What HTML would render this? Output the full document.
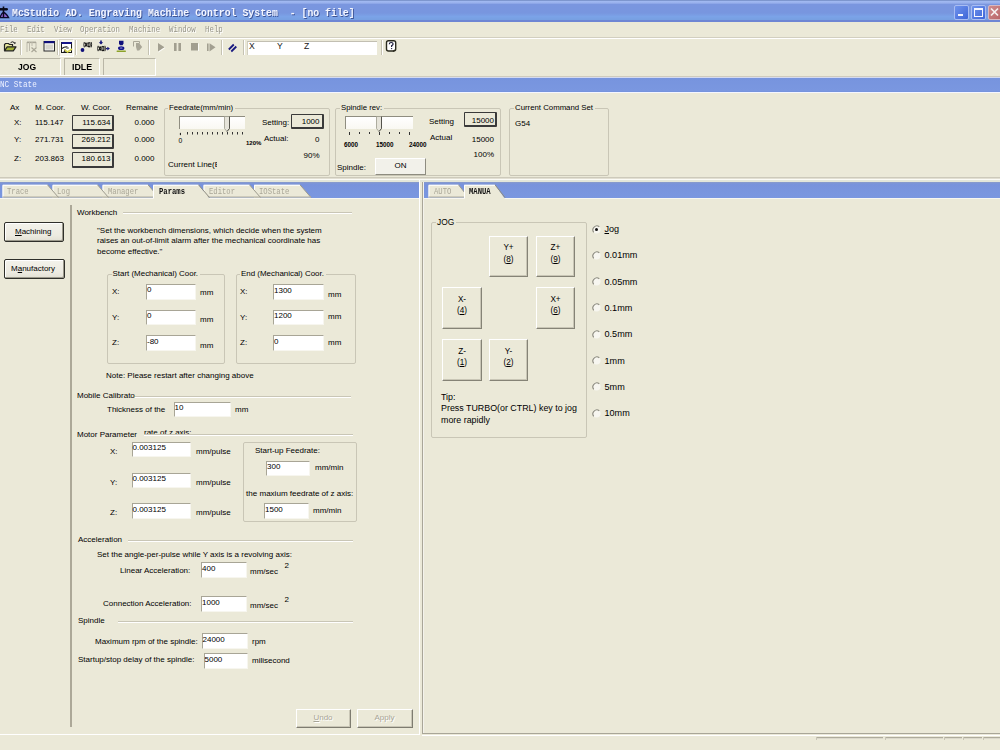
<!DOCTYPE html><html><head><meta charset="utf-8"><style>
html,body{margin:0;padding:0;}
body{width:1000px;height:750px;overflow:hidden;background:#EBE9D8;position:relative;font-family:"Liberation Sans",sans-serif;}
.a{position:absolute;}
.t{white-space:pre;}
</style></head><body>
<div class="a" style="left:0px;top:0px;width:1000px;height:22px;background:linear-gradient(#7D96CE 0px,#7D96CE 1px,#A3BBF2 1px,#98B0EC 3px,#7A96DF 4.5px,#7896DF 13px,#7BA3E8 16.5px,#77A0E2 19.5px,#6E86D4 20.5px,#6E86D4 22px);"></div>
<svg class="a" style="left:0;top:2px" width="10" height="18" viewBox="0 0 10 18">
<path d="M0 6.5H7l1 0.8-1 0.8H0z" fill="#0A0A1A" stroke="#0A0A1A" stroke-width="0.9"/>
<path d="M3.5 4.5V15.5" stroke="#0A0A1A" stroke-width="1.6"/>
<path d="M0 15.5Q1.5 11 3.5 10.5Q6 11 8.6 15.6z" fill="#8A60C8" stroke="#0A0A2A" stroke-width="1.3"/>
<path d="M3.5 10.5V15.5" stroke="#0A0A1A" stroke-width="1.4"/>
</svg>
<div class="a t" style="left:12px;top:7.50px;font-size:11px;line-height:10px;color:#F4F6FF;font-weight:bold;font-family:'Liberation Mono', monospace;text-shadow:1px 1px 0 #3E5596;transform:scaleX(0.895);transform-origin:0 0;">McStudio AD. Engraving Machine Control System  - [no file]</div>
<div class="a" style="left:954px;top:4.5px;width:14.5px;height:15px;border-radius:2px;border:1px solid #A9BDF2;box-sizing:border-box;background:linear-gradient(135deg,#6F93EC,#3E66D8);"></div>
<div class="a" style="left:957.5px;top:14px;width:5.5px;height:2px;background:#F4F6FF;"></div>
<div class="a" style="left:971px;top:4.5px;width:15px;height:15px;border-radius:2px;border:1px solid #A9BDF2;box-sizing:border-box;background:linear-gradient(135deg,#6F93EC,#3E66D8);"></div>
<div class="a" style="left:974px;top:8px;width:9px;height:8.5px;border:1px solid #F4F6FF;border-top-width:2px;box-sizing:border-box;"></div>
<div class="a" style="left:988px;top:4.5px;width:15px;height:15px;border-radius:2px;border:1px solid #D8B8C0;box-sizing:border-box;background:linear-gradient(135deg,#CF8C8E,#B86466);"></div>
<svg class="a" style="left:988px;top:4px" width="12" height="15"><path d="M3 4.5L10 11.5M10 4.5L3 11.5" stroke="#F6F0F0" stroke-width="1.7"/></svg>

<div class="a t" style="left:0px;top:25.40px;font-size:8.5px;line-height:10px;color:#97958A;font-weight:normal;font-family:'Liberation Mono', monospace;text-shadow:1px 1px 0 #FFFFFF;transform:scaleX(0.87);transform-origin:0 0;">File</div>
<div class="a t" style="left:27px;top:25.40px;font-size:8.5px;line-height:10px;color:#97958A;font-weight:normal;font-family:'Liberation Mono', monospace;text-shadow:1px 1px 0 #FFFFFF;transform:scaleX(0.87);transform-origin:0 0;">Edit</div>
<div class="a t" style="left:54px;top:25.40px;font-size:8.5px;line-height:10px;color:#97958A;font-weight:normal;font-family:'Liberation Mono', monospace;text-shadow:1px 1px 0 #FFFFFF;transform:scaleX(0.87);transform-origin:0 0;">View</div>
<div class="a t" style="left:80px;top:25.40px;font-size:8.5px;line-height:10px;color:#97958A;font-weight:normal;font-family:'Liberation Mono', monospace;text-shadow:1px 1px 0 #FFFFFF;transform:scaleX(0.87);transform-origin:0 0;">Operation</div>
<div class="a t" style="left:128.5px;top:25.40px;font-size:8.5px;line-height:10px;color:#97958A;font-weight:normal;font-family:'Liberation Mono', monospace;text-shadow:1px 1px 0 #FFFFFF;transform:scaleX(0.87);transform-origin:0 0;">Machine</div>
<div class="a t" style="left:168.5px;top:25.40px;font-size:8.5px;line-height:10px;color:#97958A;font-weight:normal;font-family:'Liberation Mono', monospace;text-shadow:1px 1px 0 #FFFFFF;transform:scaleX(0.87);transform-origin:0 0;">Window</div>
<div class="a t" style="left:205px;top:25.40px;font-size:8.5px;line-height:10px;color:#97958A;font-weight:normal;font-family:'Liberation Mono', monospace;text-shadow:1px 1px 0 #FFFFFF;transform:scaleX(0.87);transform-origin:0 0;">Help</div>
<div class="a" style="left:0px;top:37px;width:1000px;height:1px;background:#D2CFC0;"></div>
<div class="a" style="left:0px;top:38px;width:1000px;height:1px;background:#FFFFFF;"></div>
<div class="a" style="left:20px;top:40px;width:1px;height:15px;background:#C5C2B2;"></div>
<div class="a" style="left:21px;top:40px;width:1px;height:15px;background:#FFFFFF;"></div>
<div class="a" style="left:57px;top:40px;width:1px;height:15px;background:#C5C2B2;"></div>
<div class="a" style="left:58px;top:40px;width:1px;height:15px;background:#FFFFFF;"></div>
<div class="a" style="left:74.5px;top:40px;width:1px;height:15px;background:#C5C2B2;"></div>
<div class="a" style="left:75.5px;top:40px;width:1px;height:15px;background:#FFFFFF;"></div>
<div class="a" style="left:148px;top:40px;width:1px;height:15px;background:#C5C2B2;"></div>
<div class="a" style="left:149px;top:40px;width:1px;height:15px;background:#FFFFFF;"></div>
<div class="a" style="left:221px;top:40px;width:1px;height:15px;background:#C5C2B2;"></div>
<div class="a" style="left:222px;top:40px;width:1px;height:15px;background:#FFFFFF;"></div>
<div class="a" style="left:242.5px;top:40px;width:1px;height:15px;background:#C5C2B2;"></div>
<div class="a" style="left:243.5px;top:40px;width:1px;height:15px;background:#FFFFFF;"></div>
<div class="a" style="left:380.5px;top:40px;width:1px;height:15px;background:#C5C2B2;"></div>
<div class="a" style="left:381.5px;top:40px;width:1px;height:15px;background:#FFFFFF;"></div>
<div class="a" style="left:58.5px;top:38.5px;width:15px;height:18px;border-top:1px solid #D8D5C8;border-left:1px solid #D8D5C8;border-bottom:1px solid #fff;border-right:1px solid #fff;box-sizing:border-box;background:#F6F5EE;"></div>
<svg class="a" style="left:0;top:36px" width="400" height="22" viewBox="0 36 400 22">
<!-- open folder -->
<path d="M4.5 50.5V44.5l1-1h3l1 1h3v2" fill="#E4E49A" stroke="#222" stroke-width="1.2"/>
<path d="M4.5 50.8L7.2 46.8H16L13.3 50.8z" fill="#A3B338" stroke="#222" stroke-width="1.2" stroke-linejoin="round"/>
<path d="M10.5 42.8Q12 40.8 14.5 42.6" fill="none" stroke="#222" stroke-width="1"/><path d="M13.3 42.5h2.8l-1.2 1.8z" fill="#222"/>
<!-- disabled table x -->
<path d="M27 52V42h9v5" fill="none" stroke="#BDBAAC" stroke-width="1"/>
<path d="M27 42.5h9" stroke="#A9A697" stroke-width="1.3"/>
<path d="M29.5 42v9M32 42v4" stroke="#BDBAAC" stroke-width="1"/>
<path d="M31.5 47.5l5 4.5M36.5 47.5l-5 4.5" stroke="#A9A697" stroke-width="1.2"/>
<!-- window -->
<rect x="44" y="41.5" width="10.5" height="9.5" fill="#F4F4F0" stroke="#2A2A2A" stroke-width="1"/>
<rect x="44" y="41" width="10.5" height="2.2" fill="#10107A"/>
<rect x="45.5" y="44.5" width="7.5" height="5" fill="#D6D5CE"/>
<!-- pressed btn icon: window with glasses + pencil -->
<rect x="61.5" y="42.5" width="10" height="10" fill="#FFFFFF" stroke="#1A1A1A" stroke-width="1"/>
<rect x="61.5" y="42" width="10" height="2" fill="#14148A"/>
<path d="M62 48.5q2.5-2 5.5-1.5" stroke="#222" stroke-width="1.2" fill="none"/>
<ellipse cx="67.5" cy="48" rx="1.6" ry="1.1" fill="#888"/>
<path d="M64 52l1-2 1 1.5" stroke="#111" stroke-width="1.1" fill="none"/>
<path d="M64.5 49.5l3 2.5 4.5-3" stroke="#D8D64A" stroke-width="1.6" fill="none"/>
<!-- dot (x0) -->
<circle cx="82.5" cy="50" r="1.9" fill="#10107A"/>
<path d="M84.3 42q-1 2.7 0 5.4" stroke="#1A1A1A" stroke-width="0.9" fill="none"/><path d="M84.8 42.6l2.6 4.2M87.4 42.6l-2.6 4.2" stroke="#111" stroke-width="1.1"/><ellipse cx="89.1" cy="44.7" rx="1.05" ry="2.2" stroke="#111" stroke-width="1.1" fill="none"/><path d="M91.1 42q1 2.7 0 5.4" stroke="#1A1A1A" stroke-width="1" fill="none"/>
<!-- down arrow (x0) right arrow -->
<path d="M101 40.5v2.5" stroke="#10107A" stroke-width="1.6"/><path d="M98.8 42.3h4.4l-2.2 2.3z" fill="#10107A"/>
<path d="M98.1 45.8q-1 2.7 0 5.4" stroke="#1A1A1A" stroke-width="0.9" fill="none"/><path d="M98.6 46.4l2.6 4.2M101.2 46.4l-2.6 4.2" stroke="#111" stroke-width="1.1"/><ellipse cx="102.89999999999999" cy="48.5" rx="1.05" ry="2.2" stroke="#111" stroke-width="1.1" fill="none"/><path d="M104.89999999999999 45.8q1 2.7 0 5.4" stroke="#1A1A1A" stroke-width="1" fill="none"/>
<path d="M106 48.6h1.6" stroke="#10107A" stroke-width="1.4"/><path d="M107.3 46.8l2.6 1.8-2.6 1.8z" fill="#10107A"/>
<!-- person -->
<path d="M119 40.8h4.5v3l-1 1.5h-2.5l-1-1.5z" fill="#10107A"/>
<ellipse cx="121.2" cy="48.2" rx="3.2" ry="1.9" fill="#14148A"/>
<ellipse cx="121.2" cy="48" rx="1.4" ry="0.6" fill="#A0A0E0"/>
<rect x="116.5" y="50.6" width="9.5" height="1.4" rx="0.7" fill="#8CA22A"/>
<!-- disabled hand -->
<path d="M133.5 46.5v-5h6v2" fill="none" stroke="#A9A697" stroke-width="1"/>
<path d="M136 43h3l3.2 4-3 3.5h-2.2l-1-3.5z" fill="#A9A697"/>
<!-- play pause stop step (disabled) -->
<path d="M158 43l6.5 4.3-6.5 4.3z" fill="#A29F90"/>
<path d="M158.5 52l6.3-4.2" stroke="#FFFFFF" stroke-width="0.9"/>
<rect x="174" y="43" width="2.6" height="8" fill="#A29F90"/><rect x="178.4" y="43" width="2.6" height="8" fill="#A29F90"/>
<rect x="191" y="43" width="7" height="7.5" fill="#A29F90"/>
<path d="M198.5 43.5v7.5" stroke="#fff" stroke-width="0.8"/>
<path d="M207 43.5h1.6v7.6h-1.6z M209.5 43.2l6 4.1-6 4.1z" fill="#A29F90"/>
<!-- // -->
<path d="M228.8 49.5l5-5M231.3 51.5l5-5" stroke="#1A1A80" stroke-width="1.8"/>
<!-- help -->
<rect x="386.5" y="40.8" width="9.2" height="10.2" rx="2" fill="#FFFFFF" stroke="#2A2A1E" stroke-width="1.4"/>
<path d="M389.3 44.2q0-1.7 1.9-1.7t1.9 1.5q0 1-1.5 1.7v1.2" fill="none" stroke="#1A1A3A" stroke-width="1.2"/>
<circle cx="391.6" cy="48.6" r="0.7" fill="#1A1A3A"/>
<path d="M393 51.5l1.8-1.6" stroke="#2A2A1E" stroke-width="1.2"/>
</svg>
<div class="a" style="left:247px;top:40.5px;width:130px;height:14px;background:#fff;border-top:1px solid #C2BFB2;border-left:1px solid #D2CFC2;box-sizing:border-box;"></div>
<div class="a t" style="left:249px;top:41.00px;font-size:8.6px;line-height:10px;color:#222;font-weight:normal;font-family:'Liberation Sans', sans-serif;">X</div>
<div class="a t" style="left:277px;top:41.00px;font-size:8.6px;line-height:10px;color:#222;font-weight:normal;font-family:'Liberation Sans', sans-serif;">Y</div>
<div class="a t" style="left:304px;top:41.00px;font-size:8.6px;line-height:10px;color:#222;font-weight:normal;font-family:'Liberation Sans', sans-serif;">Z</div>
<div class="a" style="left:-2px;top:58px;width:63px;height:18px;border-top:1px solid #B9B6A6;border-left:1px solid #B9B6A6;border-bottom:1px solid #FFFFFF;border-right:1px solid #FFFFFF;box-sizing:border-box;"></div>
<div class="a" style="left:64px;top:58px;width:36px;height:18px;border-top:1px solid #B9B6A6;border-left:1px solid #B9B6A6;border-bottom:1px solid #FFFFFF;border-right:1px solid #FFFFFF;box-sizing:border-box;"></div>
<div class="a" style="left:103px;top:58px;width:53px;height:18px;border-top:1px solid #B9B6A6;border-left:1px solid #B9B6A6;border-bottom:1px solid #FFFFFF;border-right:1px solid #FFFFFF;box-sizing:border-box;"></div>
<div class="a t" style="left:18px;top:62.30px;font-size:9.5px;line-height:10px;color:#000;font-weight:bold;font-family:'Liberation Sans', sans-serif;transform:scaleX(0.9);transform-origin:0 0;">JOG</div>
<div class="a t" style="left:72px;top:62.30px;font-size:9.5px;line-height:10px;color:#000;font-weight:bold;font-family:'Liberation Sans', sans-serif;transform:scaleX(0.93);transform-origin:0 0;">IDLE</div>
<div class="a" style="left:0px;top:76px;width:1000px;height:1px;background:#CFCBBE;"></div>
<div class="a" style="left:0px;top:75px;width:156px;height:1px;background:#FFFFFF;"></div>
<div class="a" style="left:0px;top:77px;width:1000px;height:17px;background:linear-gradient(#D4DAF0 0px,#D4DAF0 1px,#7794DE 1px,#7A97E0 14px,#7290DA 15px,#F4F6FF 15px,#F4F6FF 16px,#ECE9D8 16px);"></div>
<div class="a t" style="left:0px;top:80.30px;font-size:8.5px;line-height:10px;color:#EEF1FF;font-weight:normal;font-family:'Liberation Mono', monospace;transform:scaleX(0.9);transform-origin:0 0;">NC State</div>
<div class="a t" style="left:10px;top:103.00px;font-size:8.0px;line-height:10px;color:#000;font-weight:normal;font-family:'Liberation Sans', sans-serif;">Ax</div>
<div class="a t" style="left:35px;top:103.00px;font-size:8.0px;line-height:10px;color:#000;font-weight:normal;font-family:'Liberation Sans', sans-serif;">M. Coor.</div>
<div class="a t" style="left:81px;top:103.00px;font-size:8.0px;line-height:10px;color:#000;font-weight:normal;font-family:'Liberation Sans', sans-serif;">W. Coor.</div>
<div class="a t" style="left:126px;top:103.00px;font-size:8.0px;line-height:10px;color:#000;font-weight:normal;font-family:'Liberation Sans', sans-serif;width:32px;overflow:hidden;">Remaine</div>
<div class="a t" style="left:14px;top:117.80px;font-size:8.0px;line-height:10px;color:#000;font-weight:normal;font-family:'Liberation Sans', sans-serif;">X:</div>
<div class="a t" style="left:35px;top:117.80px;font-size:8.0px;line-height:10px;color:#000;font-weight:normal;font-family:'Liberation Sans', sans-serif;">115.147</div>
<div class="a" style="left:72px;top:115.3px;width:42px;height:15.500000000000014px;border:1px solid #3A3A3A;border-right-width:2px;border-bottom-width:2px;border-radius:1px;box-sizing:border-box;"></div>
<div class="a t" style="left:70.5px;width:40px;text-align:right;top:117.80px;font-size:8.0px;line-height:10px;color:#000;font-weight:normal;font-family:'Liberation Sans', sans-serif;">115.634</div>
<div class="a t" style="left:114.5px;width:40px;text-align:right;top:117.80px;font-size:8.0px;line-height:10px;color:#000;font-weight:normal;font-family:'Liberation Sans', sans-serif;">0.000</div>
<div class="a t" style="left:14px;top:135.40px;font-size:8.0px;line-height:10px;color:#000;font-weight:normal;font-family:'Liberation Sans', sans-serif;">Y:</div>
<div class="a t" style="left:35px;top:135.40px;font-size:8.0px;line-height:10px;color:#000;font-weight:normal;font-family:'Liberation Sans', sans-serif;">271.731</div>
<div class="a" style="left:72px;top:133.5px;width:42px;height:15.5px;border:1px solid #3A3A3A;border-right-width:2px;border-bottom-width:2px;border-radius:1px;box-sizing:border-box;"></div>
<div class="a t" style="left:70.5px;width:40px;text-align:right;top:135.40px;font-size:8.0px;line-height:10px;color:#000;font-weight:normal;font-family:'Liberation Sans', sans-serif;">269.212</div>
<div class="a t" style="left:114.5px;width:40px;text-align:right;top:135.40px;font-size:8.0px;line-height:10px;color:#000;font-weight:normal;font-family:'Liberation Sans', sans-serif;">0.000</div>
<div class="a t" style="left:14px;top:153.80px;font-size:8.0px;line-height:10px;color:#000;font-weight:normal;font-family:'Liberation Sans', sans-serif;">Z:</div>
<div class="a t" style="left:35px;top:153.80px;font-size:8.0px;line-height:10px;color:#000;font-weight:normal;font-family:'Liberation Sans', sans-serif;">203.863</div>
<div class="a" style="left:72px;top:152px;width:42px;height:16px;border:1px solid #3A3A3A;border-right-width:2px;border-bottom-width:2px;border-radius:1px;box-sizing:border-box;"></div>
<div class="a t" style="left:70.5px;width:40px;text-align:right;top:153.80px;font-size:8.0px;line-height:10px;color:#000;font-weight:normal;font-family:'Liberation Sans', sans-serif;">180.613</div>
<div class="a t" style="left:114.5px;width:40px;text-align:right;top:153.80px;font-size:8.0px;line-height:10px;color:#000;font-weight:normal;font-family:'Liberation Sans', sans-serif;">0.000</div>
<div class="a" style="left:163.5px;top:107.5px;width:166.5px;height:68.0px;border:1px solid #C9C6B6;box-sizing:border-box;border-radius:2px;"></div>
<div class="a t" style="left:169px;top:102.50px;font-size:7.8px;line-height:10px;color:#000;font-weight:normal;font-family:'Liberation Sans', sans-serif;margin-left:-1px;"><span style="background:#EBE9D8;padding:0 2px 0 1px;">Feedrate(mm/min)</span></div>
<div class="a" style="left:179px;top:115.5px;width:66px;height:13px;background:linear-gradient(#fff,#F9F8F2);border-top:1px solid #8F8D80;border-left:1px solid #8F8D80;box-sizing:border-box;"></div>
<svg class="a" style="left:223px;top:114.5px" width="9" height="18"><path d="M1.5 1.5h5v12l-2.5 3-2.5-3z" fill="#E6E4DA" stroke="#9C9A8C" stroke-width="0.8"/><path d="M6.5 1.5v12l-2.5 3" fill="none" stroke="#55544C" stroke-width="1"/></svg>
<svg class="a" style="left:175px;top:129px" width="80" height="8"><path d="M6 3.5l-1.5 1.5 1.5 1.5" fill="#111"/><rect x="12.0" y="3" width="1" height="2.5" fill="#333"/><rect x="17.0" y="3" width="1" height="2.5" fill="#333"/><rect x="22.0" y="3" width="1" height="2.5" fill="#333"/><rect x="27.0" y="3" width="1" height="2.5" fill="#333"/><rect x="32.0" y="3" width="1" height="2.5" fill="#333"/><rect x="37.0" y="3" width="1" height="2.5" fill="#333"/><rect x="42.0" y="3" width="1" height="2.5" fill="#333"/><rect x="47.0" y="3" width="1" height="2.5" fill="#333"/><rect x="52.0" y="3" width="1" height="2.5" fill="#333"/><rect x="57.0" y="3" width="1" height="2.5" fill="#333"/><rect x="62.0" y="3" width="1" height="2.5" fill="#333"/><rect x="67.0" y="3" width="1" height="2.5" fill="#333"/></svg>
<div class="a t" style="left:178.5px;top:136.00px;font-size:6.8px;line-height:10px;color:#000;font-weight:normal;font-family:'Liberation Sans', sans-serif;letter-spacing:0.2px">0</div>
<div class="a t" style="left:246px;top:137.50px;font-size:6.0px;line-height:10px;color:#000;font-weight:bold;font-family:'Liberation Sans', sans-serif;">120%</div>
<div class="a t" style="left:262px;top:118.00px;font-size:8.0px;line-height:10px;color:#000;font-weight:normal;font-family:'Liberation Sans', sans-serif;">Setting:</div>
<div class="a" style="left:290.5px;top:114px;width:33px;height:15px;border:1px solid #3A3A3A;border-right-width:2px;border-bottom-width:2px;border-radius:1px;box-sizing:border-box;"></div>
<div class="a t" style="left:289.5px;width:30px;text-align:right;top:117.00px;font-size:8.0px;line-height:10px;color:#000;font-weight:normal;font-family:'Liberation Sans', sans-serif;">1000</div>
<div class="a t" style="left:264px;top:134.00px;font-size:8.0px;line-height:10px;color:#000;font-weight:normal;font-family:'Liberation Sans', sans-serif;">Actual:</div>
<div class="a t" style="left:289.5px;width:30px;text-align:right;top:134.80px;font-size:8.0px;line-height:10px;color:#000;font-weight:normal;font-family:'Liberation Sans', sans-serif;">0</div>
<div class="a t" style="left:289.5px;width:30px;text-align:right;top:151.00px;font-size:8.0px;line-height:10px;color:#000;font-weight:normal;font-family:'Liberation Sans', sans-serif;">90%</div>
<div class="a t" style="left:168px;top:159.50px;font-size:8.0px;line-height:10px;color:#000;font-weight:normal;font-family:'Liberation Sans', sans-serif;width:49px;overflow:hidden;">Current Line(E</div>
<div class="a" style="left:335px;top:107.5px;width:166px;height:68.0px;border:1px solid #C9C6B6;box-sizing:border-box;border-radius:2px;"></div>
<div class="a t" style="left:341px;top:102.50px;font-size:7.8px;line-height:10px;color:#000;font-weight:normal;font-family:'Liberation Sans', sans-serif;margin-left:-1px;"><span style="background:#EBE9D8;padding:0 2px 0 1px;">Spindle rev:</span></div>
<div class="a" style="left:345px;top:115.5px;width:68px;height:13px;background:linear-gradient(#fff,#F9F8F2);border-top:1px solid #8F8D80;border-left:1px solid #8F8D80;box-sizing:border-box;"></div>
<svg class="a" style="left:375px;top:114.5px" width="9" height="18"><path d="M1.5 1.5h5v12l-2.5 3-2.5-3z" fill="#E6E4DA" stroke="#9C9A8C" stroke-width="0.8"/><path d="M6.5 1.5v12l-2.5 3" fill="none" stroke="#55544C" stroke-width="1"/></svg>
<svg class="a" style="left:340px;top:129px" width="80" height="8"><rect x="9.0" y="3" width="1" height="3" fill="#333"/><rect x="19.0" y="3" width="1" height="2" fill="#333"/><rect x="29.0" y="3" width="1" height="2" fill="#333"/><rect x="39.0" y="3" width="1" height="3" fill="#333"/><rect x="49.0" y="3" width="1" height="2" fill="#333"/><rect x="59.0" y="3" width="1" height="2" fill="#333"/><rect x="69.0" y="3" width="1" height="3" fill="#333"/></svg>
<div class="a t" style="left:344px;top:139.50px;font-size:6.3px;line-height:10px;color:#000;font-weight:bold;font-family:'Liberation Sans', sans-serif;">6000</div>
<div class="a t" style="left:376px;top:139.50px;font-size:6.3px;line-height:10px;color:#000;font-weight:bold;font-family:'Liberation Sans', sans-serif;">15000</div>
<div class="a t" style="left:409px;top:139.50px;font-size:6.3px;line-height:10px;color:#000;font-weight:bold;font-family:'Liberation Sans', sans-serif;">24000</div>
<div class="a t" style="left:429px;top:117.00px;font-size:8.0px;line-height:10px;color:#000;font-weight:normal;font-family:'Liberation Sans', sans-serif;">Setting</div>
<div class="a" style="left:464px;top:112px;width:33px;height:15px;border:1px solid #3A3A3A;border-right-width:2px;border-bottom-width:2px;border-radius:1px;box-sizing:border-box;"></div>
<div class="a t" style="left:464px;width:30px;text-align:right;top:115.50px;font-size:8.0px;line-height:10px;color:#000;font-weight:normal;font-family:'Liberation Sans', sans-serif;">15000</div>
<div class="a t" style="left:430px;top:133.00px;font-size:8.0px;line-height:10px;color:#000;font-weight:normal;font-family:'Liberation Sans', sans-serif;">Actual</div>
<div class="a t" style="left:464px;width:30px;text-align:right;top:134.50px;font-size:8.0px;line-height:10px;color:#000;font-weight:normal;font-family:'Liberation Sans', sans-serif;">15000</div>
<div class="a t" style="left:464px;width:30px;text-align:right;top:150.00px;font-size:8.0px;line-height:10px;color:#000;font-weight:normal;font-family:'Liberation Sans', sans-serif;">100%</div>
<div class="a t" style="left:337px;top:163.00px;font-size:8.0px;line-height:10px;color:#000;font-weight:normal;font-family:'Liberation Sans', sans-serif;">Spindle:</div>
<div class="a" style="left:375px;top:158px;width:51px;height:17px;background:#F2F1EA;border-top:1px solid #fff;border-left:1px solid #fff;border-right:1px solid #8E8C80;border-bottom:1px solid #8E8C80;box-sizing:border-box;"></div>
<div class="a t" style="left:380.5px;width:40px;text-align:center;top:161.00px;font-size:8.0px;line-height:10px;color:#000;font-weight:normal;font-family:'Liberation Sans', sans-serif;">ON</div>
<div class="a" style="left:509px;top:107.5px;width:99.5px;height:68.0px;border:1px solid #C9C6B6;box-sizing:border-box;border-radius:2px;"></div>
<div class="a t" style="left:515px;top:102.50px;font-size:7.8px;line-height:10px;color:#000;font-weight:normal;font-family:'Liberation Sans', sans-serif;margin-left:-1px;"><span style="background:#EBE9D8;padding:0 2px 0 1px;">Current Command Set</span></div>
<div class="a t" style="left:515px;top:119.00px;font-size:8.0px;line-height:10px;color:#000;font-weight:normal;font-family:'Liberation Sans', sans-serif;">G54</div>
<div class="a" style="left:0px;top:177px;width:1000px;height:1px;background:#CDCABB;"></div>
<div class="a" style="left:0px;top:178px;width:1000px;height:1px;background:#E2DFD2;"></div>
<div class="a" style="left:0px;top:179px;width:1000px;height:1px;background:#FBFBF6;"></div>
<div class="a" style="left:0px;top:180px;width:1000px;height:2px;background:#E3E6DA;"></div>
<div class="a" style="left:0px;top:182px;width:418.5px;height:16px;background:linear-gradient(#8A9CC8,#7893DC 2px,#7A97E0);"></div>
<div class="a" style="left:424px;top:182px;width:576px;height:16px;background:linear-gradient(#8A9CC8,#7893DC 2px,#7A97E0);"></div>
<div class="a" style="left:0px;top:197.5px;width:419px;height:1px;background:#F8F7F0;"></div>
<div class="a" style="left:424px;top:197.5px;width:576px;height:1px;background:#F8F7F0;"></div>
<div class="a" style="left:419px;top:180px;width:1px;height:554.5px;background:#FFFFFF;"></div>
<div class="a" style="left:422px;top:182px;width:1px;height:552px;background:#A9A698;"></div>
<div class="a" style="left:423px;top:182px;width:1px;height:552px;background:#F4F3EC;"></div>
<div class="a" style="left:0px;top:733.5px;width:419.5px;height:1px;background:#FFFFFF;"></div>
<div class="a" style="left:422px;top:733.2px;width:578px;height:1px;background:#A9A698;"></div>
<div class="a" style="left:422px;top:734.5px;width:578px;height:1px;background:#FFFFFF;"></div>
<svg class="a" style="left:0;top:0" width="1000" height="200"><polygon points="254,197.5 254,184.8 300,184.8 311,197.5" fill="#EBE9D8"/><path d="M254.5,197.5 V185.3 H300" stroke="#FFFFFF" stroke-width="1" fill="none"/><path d="M300,184.8 L311,197.5" stroke="#9D9B8E" stroke-width="1" fill="none"/><path d="M254,197.0 H311" stroke="#B0AD9E" stroke-width="1" fill="none"/><polygon points="203.5,197.5 203.5,184.8 249.5,184.8 260.5,197.5" fill="#EBE9D8"/><path d="M204.0,197.5 V185.3 H249.5" stroke="#FFFFFF" stroke-width="1" fill="none"/><path d="M249.5,184.8 L260.5,197.5" stroke="#9D9B8E" stroke-width="1" fill="none"/><path d="M203.5,197.0 H260.5" stroke="#B0AD9E" stroke-width="1" fill="none"/><polygon points="102.5,197.5 102.5,184.8 148.0,184.8 159.0,197.5" fill="#EBE9D8"/><path d="M103.0,197.5 V185.3 H148.0" stroke="#FFFFFF" stroke-width="1" fill="none"/><path d="M148.0,184.8 L159.0,197.5" stroke="#9D9B8E" stroke-width="1" fill="none"/><path d="M102.5,197.0 H159.0" stroke="#B0AD9E" stroke-width="1" fill="none"/><polygon points="52.5,197.5 52.5,184.8 97.5,184.8 108.5,197.5" fill="#EBE9D8"/><path d="M53.0,197.5 V185.3 H97.5" stroke="#FFFFFF" stroke-width="1" fill="none"/><path d="M97.5,184.8 L108.5,197.5" stroke="#9D9B8E" stroke-width="1" fill="none"/><path d="M52.5,197.0 H108.5" stroke="#B0AD9E" stroke-width="1" fill="none"/><polygon points="2.5,197.5 2.5,184.8 47.5,184.8 58.5,197.5" fill="#EBE9D8"/><path d="M3.0,197.5 V185.3 H47.5" stroke="#FFFFFF" stroke-width="1" fill="none"/><path d="M47.5,184.8 L58.5,197.5" stroke="#9D9B8E" stroke-width="1" fill="none"/><path d="M2.5,197.0 H58.5" stroke="#B0AD9E" stroke-width="1" fill="none"/><polygon points="153,199.0 153,184.8 198.5,184.8 209.5,199.0" fill="#EBE9D8"/><path d="M153.5,198.5 V185.3 H198.5" stroke="#FFFFFF" stroke-width="1" fill="none"/><path d="M198.5,184.8 L209.5,197.5" stroke="#8E8C80" stroke-width="1" fill="none"/></svg>
<div class="a t" style="left:7px;top:186.50px;font-size:8.3px;line-height:10px;color:#A9A697;font-weight:normal;font-family:'Liberation Mono', monospace;transform:scaleX(0.87);transform-origin:0 0;">Trace</div>
<div class="a t" style="left:57px;top:186.50px;font-size:8.3px;line-height:10px;color:#A9A697;font-weight:normal;font-family:'Liberation Mono', monospace;transform:scaleX(0.87);transform-origin:0 0;">Log</div>
<div class="a t" style="left:108px;top:186.50px;font-size:8.3px;line-height:10px;color:#A9A697;font-weight:normal;font-family:'Liberation Mono', monospace;transform:scaleX(0.87);transform-origin:0 0;">Manager</div>
<div class="a t" style="left:159px;top:186.50px;font-size:8.3px;line-height:10px;color:#111;font-weight:bold;font-family:'Liberation Mono', monospace;transform:scaleX(0.87);transform-origin:0 0;">Params</div>
<div class="a t" style="left:209px;top:186.50px;font-size:8.3px;line-height:10px;color:#A9A697;font-weight:normal;font-family:'Liberation Mono', monospace;transform:scaleX(0.87);transform-origin:0 0;">Editor</div>
<div class="a t" style="left:259px;top:186.50px;font-size:8.3px;line-height:10px;color:#A9A697;font-weight:normal;font-family:'Liberation Mono', monospace;transform:scaleX(0.87);transform-origin:0 0;">IOState</div>
<svg class="a" style="left:0;top:0" width="1000" height="200"><polygon points="428.5,197.5 428.5,184.8 458.5,184.8 468.5,197.5" fill="#EBE9D8"/><path d="M429.0,197.5 V185.3 H458.5" stroke="#FFFFFF" stroke-width="1" fill="none"/><path d="M458.5,184.8 L468.5,197.5" stroke="#9D9B8E" stroke-width="1" fill="none"/><path d="M428.5,197.0 H468.5" stroke="#B0AD9E" stroke-width="1" fill="none"/><polygon points="464,199.0 464,184.8 495,184.8 505,199.0" fill="#EBE9D8"/><path d="M464.5,198.5 V185.3 H495" stroke="#FFFFFF" stroke-width="1" fill="none"/><path d="M495,184.8 L505,197.5" stroke="#8E8C80" stroke-width="1" fill="none"/></svg>
<div class="a t" style="left:434px;top:186.50px;font-size:8.3px;line-height:10px;color:#A9A697;font-weight:normal;font-family:'Liberation Mono', monospace;transform:scaleX(0.87);transform-origin:0 0;">AUTO</div>
<div class="a t" style="left:469px;top:186.50px;font-size:8.3px;line-height:10px;color:#111;font-weight:bold;font-family:'Liberation Mono', monospace;transform:scaleX(0.87);transform-origin:0 0;">MANUA</div>
<div class="a" style="left:3.5px;top:222px;width:60.5px;height:20px;border:1px solid #2F2F2A;border-radius:2px;box-sizing:border-box;background:linear-gradient(#F3F2EB,#ECEAE0 70%,#E2E0D4);box-shadow:inset -1px -1px 0 #9C9A8C, inset 1px 1px 0 #FFFFFF;"></div>
<div class="a t" style="left:15px;top:226.50px;font-size:8.0px;line-height:10px;color:#000;font-weight:normal;font-family:'Liberation Sans', sans-serif;"><u>M</u>achining</div>
<div class="a" style="left:4px;top:259px;width:60.5px;height:20px;border:1px solid #2F2F2A;border-radius:2px;box-sizing:border-box;background:linear-gradient(#F3F2EB,#ECEAE0 70%,#E2E0D4);box-shadow:inset -1px -1px 0 #9C9A8C, inset 1px 1px 0 #FFFFFF;"></div>
<div class="a t" style="left:11px;top:264.00px;font-size:8.0px;line-height:10px;color:#000;font-weight:normal;font-family:'Liberation Sans', sans-serif;">M<u>a</u>nufactory</div>
<div class="a" style="left:70px;top:205px;width:1.5px;height:522px;background:#ACA898;"></div>
<div class="a t" style="left:77px;top:208.00px;font-size:8.0px;line-height:10px;color:#000;font-weight:normal;font-family:'Liberation Sans', sans-serif;">Workbench</div>
<div class="a" style="left:123px;top:212px;width:229px;height:1px;background:#C9C6B6;"></div>
<div class="a" style="left:123px;top:213px;width:229px;height:1px;background:#FFFFFF;"></div>
<div class="a t" style="left:97px;top:225.50px;font-size:8.0px;line-height:10px;color:#000;font-weight:normal;font-family:'Liberation Sans', sans-serif;">"Set the workbench dimensions, which decide when the system</div>
<div class="a t" style="left:97px;top:235.50px;font-size:8.0px;line-height:10px;color:#000;font-weight:normal;font-family:'Liberation Sans', sans-serif;">raises an out-of-limit alarm after the mechanical coordinate has</div>
<div class="a t" style="left:97px;top:247.00px;font-size:8.0px;line-height:10px;color:#000;font-weight:normal;font-family:'Liberation Sans', sans-serif;">become effective."</div>
<div class="a" style="left:106.5px;top:273.5px;width:118.5px;height:90.5px;border:1px solid #C9C6B6;box-sizing:border-box;border-radius:2px;"></div>
<div class="a t" style="left:112.5px;top:268.50px;font-size:7.95px;line-height:10px;color:#000;font-weight:normal;font-family:'Liberation Sans', sans-serif;margin-left:-1px;"><span style="background:#EBE9D8;padding:0 2px 0 1px;">Start (Mechanical) Coor.</span></div>
<div class="a" style="left:235.5px;top:273.5px;width:120.5px;height:90.5px;border:1px solid #C9C6B6;box-sizing:border-box;border-radius:2px;"></div>
<div class="a t" style="left:241px;top:268.50px;font-size:7.95px;line-height:10px;color:#000;font-weight:normal;font-family:'Liberation Sans', sans-serif;margin-left:-1px;"><span style="background:#EBE9D8;padding:0 2px 0 1px;">End (Mechanical) Coor.</span></div>
<div class="a t" style="left:112px;top:286.70px;font-size:8.0px;line-height:10px;color:#000;font-weight:normal;font-family:'Liberation Sans', sans-serif;">X:</div>
<div class="a" style="left:146px;top:283.7px;width:50px;height:16.0px;background:#fff;border-top:1px solid #A8A596;border-left:1px solid #A8A596;border-right:1px solid #F7F6EF;border-bottom:1px solid #F7F6EF;box-sizing:border-box;"></div>
<div class="a t" style="left:147px;top:285.30px;font-size:8.0px;line-height:10px;color:#000;font-weight:normal;font-family:'Liberation Sans', sans-serif;">0</div>
<div class="a t" style="left:200px;top:287.50px;font-size:8.0px;line-height:10px;color:#000;font-weight:normal;font-family:'Liberation Sans', sans-serif;">mm</div>
<div class="a t" style="left:240px;top:287.00px;font-size:8.0px;line-height:10px;color:#000;font-weight:normal;font-family:'Liberation Sans', sans-serif;">X:</div>
<div class="a" style="left:273px;top:284px;width:51px;height:15.5px;background:#fff;border-top:1px solid #A8A596;border-left:1px solid #A8A596;border-right:1px solid #F7F6EF;border-bottom:1px solid #F7F6EF;box-sizing:border-box;"></div>
<div class="a t" style="left:274px;top:285.60px;font-size:8.0px;line-height:10px;color:#000;font-weight:normal;font-family:'Liberation Sans', sans-serif;">1300</div>
<div class="a t" style="left:328px;top:289.60px;font-size:8.0px;line-height:10px;color:#000;font-weight:normal;font-family:'Liberation Sans', sans-serif;">mm</div>
<div class="a t" style="left:112px;top:312.70px;font-size:8.0px;line-height:10px;color:#000;font-weight:normal;font-family:'Liberation Sans', sans-serif;">Y:</div>
<div class="a" style="left:146px;top:309.7px;width:50px;height:15.5px;background:#fff;border-top:1px solid #A8A596;border-left:1px solid #A8A596;border-right:1px solid #F7F6EF;border-bottom:1px solid #F7F6EF;box-sizing:border-box;"></div>
<div class="a t" style="left:147px;top:311.30px;font-size:8.0px;line-height:10px;color:#000;font-weight:normal;font-family:'Liberation Sans', sans-serif;">0</div>
<div class="a t" style="left:200px;top:315.00px;font-size:8.0px;line-height:10px;color:#000;font-weight:normal;font-family:'Liberation Sans', sans-serif;">mm</div>
<div class="a t" style="left:240px;top:313.00px;font-size:8.0px;line-height:10px;color:#000;font-weight:normal;font-family:'Liberation Sans', sans-serif;">Y:</div>
<div class="a" style="left:273px;top:309.5px;width:51px;height:15.5px;background:#fff;border-top:1px solid #A8A596;border-left:1px solid #A8A596;border-right:1px solid #F7F6EF;border-bottom:1px solid #F7F6EF;box-sizing:border-box;"></div>
<div class="a t" style="left:274px;top:311.10px;font-size:8.0px;line-height:10px;color:#000;font-weight:normal;font-family:'Liberation Sans', sans-serif;">1200</div>
<div class="a t" style="left:328px;top:312.00px;font-size:8.0px;line-height:10px;color:#000;font-weight:normal;font-family:'Liberation Sans', sans-serif;">mm</div>
<div class="a t" style="left:112px;top:338.00px;font-size:8.0px;line-height:10px;color:#000;font-weight:normal;font-family:'Liberation Sans', sans-serif;">Z:</div>
<div class="a" style="left:146px;top:335px;width:50px;height:16px;background:#fff;border-top:1px solid #A8A596;border-left:1px solid #A8A596;border-right:1px solid #F7F6EF;border-bottom:1px solid #F7F6EF;box-sizing:border-box;"></div>
<div class="a t" style="left:147px;top:336.60px;font-size:8.0px;line-height:10px;color:#000;font-weight:normal;font-family:'Liberation Sans', sans-serif;">-80</div>
<div class="a t" style="left:200px;top:341.00px;font-size:8.0px;line-height:10px;color:#000;font-weight:normal;font-family:'Liberation Sans', sans-serif;">mm</div>
<div class="a t" style="left:240px;top:338.40px;font-size:8.0px;line-height:10px;color:#000;font-weight:normal;font-family:'Liberation Sans', sans-serif;">Z:</div>
<div class="a" style="left:273px;top:335.4px;width:51px;height:15.600000000000023px;background:#fff;border-top:1px solid #A8A596;border-left:1px solid #A8A596;border-right:1px solid #F7F6EF;border-bottom:1px solid #F7F6EF;box-sizing:border-box;"></div>
<div class="a t" style="left:274px;top:337.00px;font-size:8.0px;line-height:10px;color:#000;font-weight:normal;font-family:'Liberation Sans', sans-serif;">0</div>
<div class="a t" style="left:328px;top:338.00px;font-size:8.0px;line-height:10px;color:#000;font-weight:normal;font-family:'Liberation Sans', sans-serif;">mm</div>
<div class="a t" style="left:106px;top:371.00px;font-size:8.0px;line-height:10px;color:#000;font-weight:normal;font-family:'Liberation Sans', sans-serif;">Note: Please restart after changing above</div>
<div class="a t" style="left:77px;top:391.00px;font-size:8.0px;line-height:10px;color:#000;font-weight:normal;font-family:'Liberation Sans', sans-serif;width:58px;overflow:hidden;">Mobile Calibrator</div>
<div class="a" style="left:135px;top:395.5px;width:216px;height:1px;background:#C9C6B6;"></div>
<div class="a" style="left:135px;top:396.5px;width:216px;height:1px;background:#FFFFFF;"></div>
<div class="a t" style="left:107px;top:404.70px;font-size:8.0px;line-height:10px;color:#000;font-weight:normal;font-family:'Liberation Sans', sans-serif;">Thickness of the</div>
<div class="a" style="left:173.5px;top:401.5px;width:57.5px;height:15.5px;background:#fff;border-top:1px solid #A8A596;border-left:1px solid #A8A596;border-right:1px solid #F7F6EF;border-bottom:1px solid #F7F6EF;box-sizing:border-box;"></div>
<div class="a t" style="left:174.5px;top:403.10px;font-size:8.0px;line-height:10px;color:#000;font-weight:normal;font-family:'Liberation Sans', sans-serif;">10</div>
<div class="a t" style="left:235px;top:405.00px;font-size:8.0px;line-height:10px;color:#000;font-weight:normal;font-family:'Liberation Sans', sans-serif;">mm</div>
<div class="a t" style="left:77px;top:430.00px;font-size:8.0px;line-height:10px;color:#000;font-weight:normal;font-family:'Liberation Sans', sans-serif;">Motor Parameter</div>
<div class="a t" style="left:144px;top:428px;height:6.3px;overflow:hidden;font-size:8px;line-height:10px;">rate of z axis:</div>
<div class="a" style="left:144px;top:434px;width:209px;height:1px;background:#C9C6B6;"></div>
<div class="a" style="left:144px;top:435px;width:209px;height:1px;background:#FFFFFF;"></div>
<div class="a t" style="left:110px;top:446.70px;font-size:8.0px;line-height:10px;color:#000;font-weight:normal;font-family:'Liberation Sans', sans-serif;">X:</div>
<div class="a" style="left:131.5px;top:441.5px;width:59.5px;height:15.300000000000011px;background:#fff;border-top:1px solid #A8A596;border-left:1px solid #A8A596;border-right:1px solid #F7F6EF;border-bottom:1px solid #F7F6EF;box-sizing:border-box;"></div>
<div class="a t" style="left:132.5px;top:443.10px;font-size:8.0px;line-height:10px;color:#000;font-weight:normal;font-family:'Liberation Sans', sans-serif;">0.003125</div>
<div class="a t" style="left:196px;top:446.70px;font-size:8.0px;line-height:10px;color:#000;font-weight:normal;font-family:'Liberation Sans', sans-serif;">mm/pulse</div>
<div class="a t" style="left:110px;top:478.00px;font-size:8.0px;line-height:10px;color:#000;font-weight:normal;font-family:'Liberation Sans', sans-serif;">Y:</div>
<div class="a" style="left:131.5px;top:472.7px;width:59.5px;height:15.300000000000011px;background:#fff;border-top:1px solid #A8A596;border-left:1px solid #A8A596;border-right:1px solid #F7F6EF;border-bottom:1px solid #F7F6EF;box-sizing:border-box;"></div>
<div class="a t" style="left:132.5px;top:474.30px;font-size:8.0px;line-height:10px;color:#000;font-weight:normal;font-family:'Liberation Sans', sans-serif;">0.003125</div>
<div class="a t" style="left:196px;top:478.00px;font-size:8.0px;line-height:10px;color:#000;font-weight:normal;font-family:'Liberation Sans', sans-serif;">mm/pulse</div>
<div class="a t" style="left:110px;top:507.60px;font-size:8.0px;line-height:10px;color:#000;font-weight:normal;font-family:'Liberation Sans', sans-serif;">Z:</div>
<div class="a" style="left:131.5px;top:503.2px;width:59.5px;height:15.400000000000034px;background:#fff;border-top:1px solid #A8A596;border-left:1px solid #A8A596;border-right:1px solid #F7F6EF;border-bottom:1px solid #F7F6EF;box-sizing:border-box;"></div>
<div class="a t" style="left:132.5px;top:504.80px;font-size:8.0px;line-height:10px;color:#000;font-weight:normal;font-family:'Liberation Sans', sans-serif;">0.003125</div>
<div class="a t" style="left:196px;top:507.60px;font-size:8.0px;line-height:10px;color:#000;font-weight:normal;font-family:'Liberation Sans', sans-serif;">mm/pulse</div>
<div class="a" style="left:242.5px;top:441.5px;width:114.0px;height:80.5px;border:1px solid #C9C6B6;box-sizing:border-box;border-radius:2px;"></div>
<div class="a t" style="left:255px;top:445.70px;font-size:8.0px;line-height:10px;color:#000;font-weight:normal;font-family:'Liberation Sans', sans-serif;">Start-up Feedrate:</div>
<div class="a" style="left:266px;top:460.5px;width:44px;height:15.5px;background:#fff;border-top:1px solid #A8A596;border-left:1px solid #A8A596;border-right:1px solid #F7F6EF;border-bottom:1px solid #F7F6EF;box-sizing:border-box;"></div>
<div class="a t" style="left:267px;top:462.10px;font-size:8.0px;line-height:10px;color:#000;font-weight:normal;font-family:'Liberation Sans', sans-serif;">300</div>
<div class="a t" style="left:315px;top:463.00px;font-size:8.0px;line-height:10px;color:#000;font-weight:normal;font-family:'Liberation Sans', sans-serif;">mm/min</div>
<div class="a t" style="left:246px;top:489.00px;font-size:8.05px;line-height:10px;color:#000;font-weight:normal;font-family:'Liberation Sans', sans-serif;">the maxium feedrate of z axis:</div>
<div class="a" style="left:264px;top:503.3px;width:44.5px;height:15.699999999999989px;background:#fff;border-top:1px solid #A8A596;border-left:1px solid #A8A596;border-right:1px solid #F7F6EF;border-bottom:1px solid #F7F6EF;box-sizing:border-box;"></div>
<div class="a t" style="left:265px;top:504.90px;font-size:8.0px;line-height:10px;color:#000;font-weight:normal;font-family:'Liberation Sans', sans-serif;">1500</div>
<div class="a t" style="left:313px;top:505.70px;font-size:8.0px;line-height:10px;color:#000;font-weight:normal;font-family:'Liberation Sans', sans-serif;">mm/min</div>
<div class="a t" style="left:78px;top:534.60px;font-size:8.0px;line-height:10px;color:#000;font-weight:normal;font-family:'Liberation Sans', sans-serif;">Acceleration</div>
<div class="a" style="left:128px;top:539.5px;width:225px;height:1px;background:#C9C6B6;"></div>
<div class="a" style="left:128px;top:540.5px;width:225px;height:1px;background:#FFFFFF;"></div>
<div class="a t" style="left:97px;top:550.00px;font-size:8.0px;line-height:10px;color:#000;font-weight:normal;font-family:'Liberation Sans', sans-serif;">Set the angle-per-pulse while Y axis is a revolving axis:</div>
<div class="a t" style="left:120px;top:565.80px;font-size:8.0px;line-height:10px;color:#000;font-weight:normal;font-family:'Liberation Sans', sans-serif;">Linear Acceleration:</div>
<div class="a" style="left:201px;top:562.4px;width:45.5px;height:15.600000000000023px;background:#fff;border-top:1px solid #A8A596;border-left:1px solid #A8A596;border-right:1px solid #F7F6EF;border-bottom:1px solid #F7F6EF;box-sizing:border-box;"></div>
<div class="a t" style="left:202px;top:564.00px;font-size:8.0px;line-height:10px;color:#000;font-weight:normal;font-family:'Liberation Sans', sans-serif;">400</div>
<div class="a t" style="left:250px;top:567.00px;font-size:8.0px;line-height:10px;color:#000;font-weight:normal;font-family:'Liberation Sans', sans-serif;">mm/sec</div>
<div class="a t" style="left:284.5px;top:561.00px;font-size:8.0px;line-height:10px;color:#000;font-weight:normal;font-family:'Liberation Sans', sans-serif;">2</div>
<div class="a t" style="left:103px;top:599.00px;font-size:8.0px;line-height:10px;color:#000;font-weight:normal;font-family:'Liberation Sans', sans-serif;">Connection Acceleration:</div>
<div class="a" style="left:201px;top:596px;width:45.5px;height:15.600000000000023px;background:#fff;border-top:1px solid #A8A596;border-left:1px solid #A8A596;border-right:1px solid #F7F6EF;border-bottom:1px solid #F7F6EF;box-sizing:border-box;"></div>
<div class="a t" style="left:202px;top:597.60px;font-size:8.0px;line-height:10px;color:#000;font-weight:normal;font-family:'Liberation Sans', sans-serif;">1000</div>
<div class="a t" style="left:250px;top:601.00px;font-size:8.0px;line-height:10px;color:#000;font-weight:normal;font-family:'Liberation Sans', sans-serif;">mm/sec</div>
<div class="a t" style="left:284.5px;top:595.00px;font-size:8.0px;line-height:10px;color:#000;font-weight:normal;font-family:'Liberation Sans', sans-serif;">2</div>
<div class="a t" style="left:78px;top:615.80px;font-size:8.0px;line-height:10px;color:#000;font-weight:normal;font-family:'Liberation Sans', sans-serif;">Spindle</div>
<div class="a" style="left:118px;top:621px;width:235px;height:1px;background:#C9C6B6;"></div>
<div class="a" style="left:118px;top:622px;width:235px;height:1px;background:#FFFFFF;"></div>
<div class="a t" style="left:95px;top:637.00px;font-size:8.0px;line-height:10px;color:#000;font-weight:normal;font-family:'Liberation Sans', sans-serif;">Maximum rpm of the spindle:</div>
<div class="a" style="left:201.5px;top:633.3px;width:46.0px;height:15.800000000000068px;background:#fff;border-top:1px solid #A8A596;border-left:1px solid #A8A596;border-right:1px solid #F7F6EF;border-bottom:1px solid #F7F6EF;box-sizing:border-box;"></div>
<div class="a t" style="left:202.5px;top:634.90px;font-size:8.0px;line-height:10px;color:#000;font-weight:normal;font-family:'Liberation Sans', sans-serif;">24000</div>
<div class="a t" style="left:252px;top:637.00px;font-size:8.0px;line-height:10px;color:#000;font-weight:normal;font-family:'Liberation Sans', sans-serif;">rpm</div>
<div class="a t" style="left:78px;top:655.40px;font-size:8.0px;line-height:10px;color:#000;font-weight:normal;font-family:'Liberation Sans', sans-serif;">Startup/stop delay of the spindle:</div>
<div class="a" style="left:203.5px;top:653.2px;width:44.5px;height:15.599999999999909px;background:#fff;border-top:1px solid #A8A596;border-left:1px solid #A8A596;border-right:1px solid #F7F6EF;border-bottom:1px solid #F7F6EF;box-sizing:border-box;"></div>
<div class="a t" style="left:204.5px;top:654.80px;font-size:8.0px;line-height:10px;color:#000;font-weight:normal;font-family:'Liberation Sans', sans-serif;">5000</div>
<div class="a t" style="left:252px;top:656.00px;font-size:8.0px;line-height:10px;color:#000;font-weight:normal;font-family:'Liberation Sans', sans-serif;">milisecond</div>
<div class="a" style="left:295.5px;top:709px;width:55.5px;height:19px;box-sizing:border-box;border-top:1px solid #FFFFFF;border-left:1px solid #FFFFFF;border-right:1.5px solid #7E7C70;border-bottom:1.5px solid #7E7C70;box-shadow:inset -1px -1px 0 #C9C6B6;"></div>
<div class="a t" style="left:298.0px;width:50px;text-align:center;top:713.00px;font-size:8.0px;line-height:10px;color:#A8A596;font-weight:normal;font-family:'Liberation Sans', sans-serif;text-shadow:1px 1px 0 #fff;"><u>U</u>ndo</div>
<div class="a" style="left:357px;top:709px;width:56px;height:19px;box-sizing:border-box;border-top:1px solid #FFFFFF;border-left:1px solid #FFFFFF;border-right:1.5px solid #7E7C70;border-bottom:1.5px solid #7E7C70;box-shadow:inset -1px -1px 0 #C9C6B6;"></div>
<div class="a t" style="left:359.5px;width:50px;text-align:center;top:713.00px;font-size:8.0px;line-height:10px;color:#A8A596;font-weight:normal;font-family:'Liberation Sans', sans-serif;text-shadow:1px 1px 0 #fff;">Apply</div>
<div class="a" style="left:430.5px;top:222px;width:156.0px;height:215.5px;border:1px solid #C9C6B6;box-sizing:border-box;border-radius:2px;"></div>
<div class="a t" style="left:437px;top:217.00px;font-size:8.4px;line-height:10px;color:#000;font-weight:normal;font-family:'Liberation Sans', sans-serif;margin-left:-1px;"><span style="background:#EBE9D8;padding:0 2px 0 1px;">JOG</span></div>
<div class="a" style="left:489px;top:235.5px;width:39px;height:41.5px;box-sizing:border-box;border-top:1px solid #FFFFFF;border-left:1px solid #FFFFFF;border-right:1px solid #858376;border-bottom:1px solid #858376;box-shadow:inset -1px -1px 0 #C9C6B6;"></div>
<div class="a t" style="left:493.5px;width:30px;text-align:center;top:243.00px;font-size:8.2px;line-height:10px;color:#000;font-weight:normal;font-family:'Liberation Sans', sans-serif;">Y+</div>
<div class="a t" style="left:493.5px;width:30px;text-align:center;top:254.50px;font-size:8.2px;line-height:10px;color:#000;font-weight:normal;font-family:'Liberation Sans', sans-serif;">(<u>8</u>)</div>
<div class="a" style="left:536px;top:235.5px;width:39px;height:41.5px;box-sizing:border-box;border-top:1px solid #FFFFFF;border-left:1px solid #FFFFFF;border-right:1px solid #858376;border-bottom:1px solid #858376;box-shadow:inset -1px -1px 0 #C9C6B6;"></div>
<div class="a t" style="left:540.5px;width:30px;text-align:center;top:243.00px;font-size:8.2px;line-height:10px;color:#000;font-weight:normal;font-family:'Liberation Sans', sans-serif;">Z+</div>
<div class="a t" style="left:540.5px;width:30px;text-align:center;top:254.50px;font-size:8.2px;line-height:10px;color:#000;font-weight:normal;font-family:'Liberation Sans', sans-serif;">(<u>9</u>)</div>
<div class="a" style="left:442px;top:287px;width:40px;height:41.5px;box-sizing:border-box;border-top:1px solid #FFFFFF;border-left:1px solid #FFFFFF;border-right:1px solid #858376;border-bottom:1px solid #858376;box-shadow:inset -1px -1px 0 #C9C6B6;"></div>
<div class="a t" style="left:447.0px;width:30px;text-align:center;top:294.50px;font-size:8.2px;line-height:10px;color:#000;font-weight:normal;font-family:'Liberation Sans', sans-serif;">X-</div>
<div class="a t" style="left:447.0px;width:30px;text-align:center;top:306.00px;font-size:8.2px;line-height:10px;color:#000;font-weight:normal;font-family:'Liberation Sans', sans-serif;">(<u>4</u>)</div>
<div class="a" style="left:536px;top:287px;width:39px;height:41.5px;box-sizing:border-box;border-top:1px solid #FFFFFF;border-left:1px solid #FFFFFF;border-right:1px solid #858376;border-bottom:1px solid #858376;box-shadow:inset -1px -1px 0 #C9C6B6;"></div>
<div class="a t" style="left:540.5px;width:30px;text-align:center;top:294.50px;font-size:8.2px;line-height:10px;color:#000;font-weight:normal;font-family:'Liberation Sans', sans-serif;">X+</div>
<div class="a t" style="left:540.5px;width:30px;text-align:center;top:306.00px;font-size:8.2px;line-height:10px;color:#000;font-weight:normal;font-family:'Liberation Sans', sans-serif;">(<u>6</u>)</div>
<div class="a" style="left:442px;top:339px;width:40px;height:41.5px;box-sizing:border-box;border-top:1px solid #FFFFFF;border-left:1px solid #FFFFFF;border-right:1px solid #858376;border-bottom:1px solid #858376;box-shadow:inset -1px -1px 0 #C9C6B6;"></div>
<div class="a t" style="left:447.0px;width:30px;text-align:center;top:346.50px;font-size:8.2px;line-height:10px;color:#000;font-weight:normal;font-family:'Liberation Sans', sans-serif;">Z-</div>
<div class="a t" style="left:447.0px;width:30px;text-align:center;top:358.00px;font-size:8.2px;line-height:10px;color:#000;font-weight:normal;font-family:'Liberation Sans', sans-serif;">(<u>1</u>)</div>
<div class="a" style="left:489px;top:339px;width:39px;height:41.5px;box-sizing:border-box;border-top:1px solid #FFFFFF;border-left:1px solid #FFFFFF;border-right:1px solid #858376;border-bottom:1px solid #858376;box-shadow:inset -1px -1px 0 #C9C6B6;"></div>
<div class="a t" style="left:493.5px;width:30px;text-align:center;top:346.50px;font-size:8.2px;line-height:10px;color:#000;font-weight:normal;font-family:'Liberation Sans', sans-serif;">Y-</div>
<div class="a t" style="left:493.5px;width:30px;text-align:center;top:358.00px;font-size:8.2px;line-height:10px;color:#000;font-weight:normal;font-family:'Liberation Sans', sans-serif;">(<u>2</u>)</div>
<div class="a t" style="left:441px;top:392.40px;font-size:8.9px;line-height:10px;color:#000;font-weight:normal;font-family:'Liberation Sans', sans-serif;">Tip:</div>
<div class="a t" style="left:441px;top:403.40px;font-size:8.9px;line-height:10px;color:#000;font-weight:normal;font-family:'Liberation Sans', sans-serif;">Press TURBO(or CTRL) key to jog</div>
<div class="a t" style="left:441px;top:414.50px;font-size:8.9px;line-height:10px;color:#000;font-weight:normal;font-family:'Liberation Sans', sans-serif;">more rapidly</div>
<svg class="a" style="left:591px;top:223.5px" width="11" height="11"><circle cx="5.5" cy="5.5" r="4" fill="#F7F6F0"/><path d="M2.7 8.3A4 4 0 0 1 8.3 2.7" stroke="#8A887C" stroke-width="1.1" fill="none"/><circle cx="5.5" cy="5.5" r="1.5" fill="#111"/></svg>
<div class="a t" style="left:604.5px;top:224.00px;font-size:9.1px;line-height:10px;color:#000;font-weight:normal;font-family:'Liberation Sans', sans-serif;"><u>J</u>og</div>
<svg class="a" style="left:591px;top:249.8px" width="11" height="11"><circle cx="5.5" cy="5.5" r="4" fill="#F7F6F0"/><path d="M2.7 8.3A4 4 0 0 1 8.3 2.7" stroke="#8A887C" stroke-width="1.1" fill="none"/></svg>
<div class="a t" style="left:604.5px;top:250.30px;font-size:9.1px;line-height:10px;color:#000;font-weight:normal;font-family:'Liberation Sans', sans-serif;">0.01mm</div>
<svg class="a" style="left:591px;top:276.1px" width="11" height="11"><circle cx="5.5" cy="5.5" r="4" fill="#F7F6F0"/><path d="M2.7 8.3A4 4 0 0 1 8.3 2.7" stroke="#8A887C" stroke-width="1.1" fill="none"/></svg>
<div class="a t" style="left:604.5px;top:276.60px;font-size:9.1px;line-height:10px;color:#000;font-weight:normal;font-family:'Liberation Sans', sans-serif;">0.05mm</div>
<svg class="a" style="left:591px;top:302.4px" width="11" height="11"><circle cx="5.5" cy="5.5" r="4" fill="#F7F6F0"/><path d="M2.7 8.3A4 4 0 0 1 8.3 2.7" stroke="#8A887C" stroke-width="1.1" fill="none"/></svg>
<div class="a t" style="left:604.5px;top:302.90px;font-size:9.1px;line-height:10px;color:#000;font-weight:normal;font-family:'Liberation Sans', sans-serif;">0.1mm</div>
<svg class="a" style="left:591px;top:328.7px" width="11" height="11"><circle cx="5.5" cy="5.5" r="4" fill="#F7F6F0"/><path d="M2.7 8.3A4 4 0 0 1 8.3 2.7" stroke="#8A887C" stroke-width="1.1" fill="none"/></svg>
<div class="a t" style="left:604.5px;top:329.20px;font-size:9.1px;line-height:10px;color:#000;font-weight:normal;font-family:'Liberation Sans', sans-serif;">0.5mm</div>
<svg class="a" style="left:591px;top:355.0px" width="11" height="11"><circle cx="5.5" cy="5.5" r="4" fill="#F7F6F0"/><path d="M2.7 8.3A4 4 0 0 1 8.3 2.7" stroke="#8A887C" stroke-width="1.1" fill="none"/></svg>
<div class="a t" style="left:604.5px;top:355.50px;font-size:9.1px;line-height:10px;color:#000;font-weight:normal;font-family:'Liberation Sans', sans-serif;">1mm</div>
<svg class="a" style="left:591px;top:381.3px" width="11" height="11"><circle cx="5.5" cy="5.5" r="4" fill="#F7F6F0"/><path d="M2.7 8.3A4 4 0 0 1 8.3 2.7" stroke="#8A887C" stroke-width="1.1" fill="none"/></svg>
<div class="a t" style="left:604.5px;top:381.80px;font-size:9.1px;line-height:10px;color:#000;font-weight:normal;font-family:'Liberation Sans', sans-serif;">5mm</div>
<svg class="a" style="left:591px;top:407.6px" width="11" height="11"><circle cx="5.5" cy="5.5" r="4" fill="#F7F6F0"/><path d="M2.7 8.3A4 4 0 0 1 8.3 2.7" stroke="#8A887C" stroke-width="1.1" fill="none"/></svg>
<div class="a t" style="left:604.5px;top:408.10px;font-size:9.1px;line-height:10px;color:#000;font-weight:normal;font-family:'Liberation Sans', sans-serif;">10mm</div>
<div class="a" style="left:816px;top:736.5px;width:67px;height:14px;border-top:1px solid #AEAB9C;box-sizing:border-box;"></div>
<div class="a" style="left:816px;top:737.5px;width:67px;height:1px;background:#DCD9CB;"></div>
<div class="a" style="left:816px;top:736.5px;width:1px;height:3px;background:#C8C5B6;"></div>
<div class="a" style="left:885px;top:736.5px;width:57.5px;height:14px;border-top:1px solid #AEAB9C;box-sizing:border-box;"></div>
<div class="a" style="left:885px;top:737.5px;width:57.5px;height:1px;background:#DCD9CB;"></div>
<div class="a" style="left:885px;top:736.5px;width:1px;height:3px;background:#C8C5B6;"></div>
<div class="a" style="left:944px;top:736.5px;width:17.5px;height:14px;border-top:1px solid #AEAB9C;box-sizing:border-box;"></div>
<div class="a" style="left:944px;top:737.5px;width:17.5px;height:1px;background:#DCD9CB;"></div>
<div class="a" style="left:944px;top:736.5px;width:1px;height:3px;background:#C8C5B6;"></div>
<div class="a" style="left:963px;top:736.5px;width:18.5px;height:14px;border-top:1px solid #AEAB9C;box-sizing:border-box;"></div>
<div class="a" style="left:963px;top:737.5px;width:18.5px;height:1px;background:#DCD9CB;"></div>
<div class="a" style="left:963px;top:736.5px;width:1px;height:3px;background:#C8C5B6;"></div>
<div class="a" style="left:983px;top:736.5px;width:19px;height:14px;border-top:1px solid #AEAB9C;box-sizing:border-box;"></div>
<div class="a" style="left:983px;top:737.5px;width:19px;height:1px;background:#DCD9CB;"></div>
<div class="a" style="left:983px;top:736.5px;width:1px;height:3px;background:#C8C5B6;"></div>
</body></html>
